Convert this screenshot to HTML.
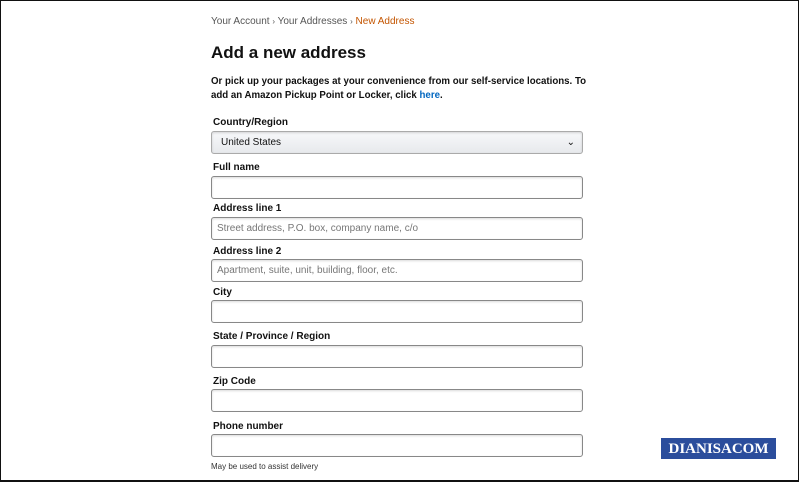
<!DOCTYPE html><html><head><style>
body{margin:0;width:800px;height:482px;background:#fff;font-family:"Liberation Sans",Arial,sans-serif;position:relative;overflow:hidden}
.frame{position:absolute;left:0;top:0;width:797px;height:479px;border:1.5px solid #111;border-bottom-width:2px;box-sizing:content-box}
.a{position:absolute;white-space:nowrap}
.l{font-size:10px;font-weight:bold;color:#111;left:213px}
.i{position:absolute;left:211px;width:365px;height:21px;border:1px solid #888;border-radius:3px;box-shadow:inset 0 1px 2px rgba(0,0,0,.15);font-size:10px;color:#777;line-height:21px;padding-left:5px;box-sizing:content-box}
</style></head><body>
<div class="frame"></div>
<div class="a" style="left:211px;top:16px;font-size:10px;color:#555">Your Account <span style="font-size:8px">›</span> Your Addresses <span style="font-size:8px">›</span> <span style="color:#c45500">New Address</span></div>
<div class="a" style="left:211px;top:43px;font-size:17px;font-weight:bold;color:#111">Add a new address</div>
<div class="a" style="left:211px;top:75px;font-size:9.7px;font-weight:bold;color:#111;line-height:14px">Or pick up your packages at your convenience from our self-service locations. To<br>add an Amazon Pickup Point or Locker, click <span style="color:#0066c0">here</span>.</div>
<div class="a l" style="top:117px">Country/Region</div>
<div class="i" style="top:131px;background:linear-gradient(#f7f8fa,#e7e9ec);color:#111;border-color:#aaa;width:361px;padding-left:9px">United States<span style="position:absolute;right:7px;top:0;font-size:10px">&#8964;</span></div>
<div class="a l" style="top:162px">Full name</div><div class="i" style="top:176px"></div>
<div class="a l" style="top:203px">Address line 1</div><div class="i" style="top:217px">Street address, P.O. box, company name, c/o</div>
<div class="a l" style="top:246px">Address line 2</div><div class="i" style="top:259px">Apartment, suite, unit, building, floor, etc.</div>
<div class="a l" style="top:287px">City</div><div class="i" style="top:300px"></div>
<div class="a l" style="top:331px">State / Province / Region</div><div class="i" style="top:345px"></div>
<div class="a l" style="top:376px">Zip Code</div><div class="i" style="top:389px"></div>
<div class="a l" style="top:421px">Phone number</div><div class="i" style="top:434px"></div>
<div class="a" style="left:211px;top:462px;font-size:8px;color:#333">May be used to assist delivery</div>
<div class="a" style="left:661px;top:438px;width:115px;height:21px;background:#2b4d9c;color:#fff;font-family:'Liberation Serif',serif;font-weight:bold;font-size:15px;line-height:22px;text-align:center">DIANISACOM</div>
</body></html>
